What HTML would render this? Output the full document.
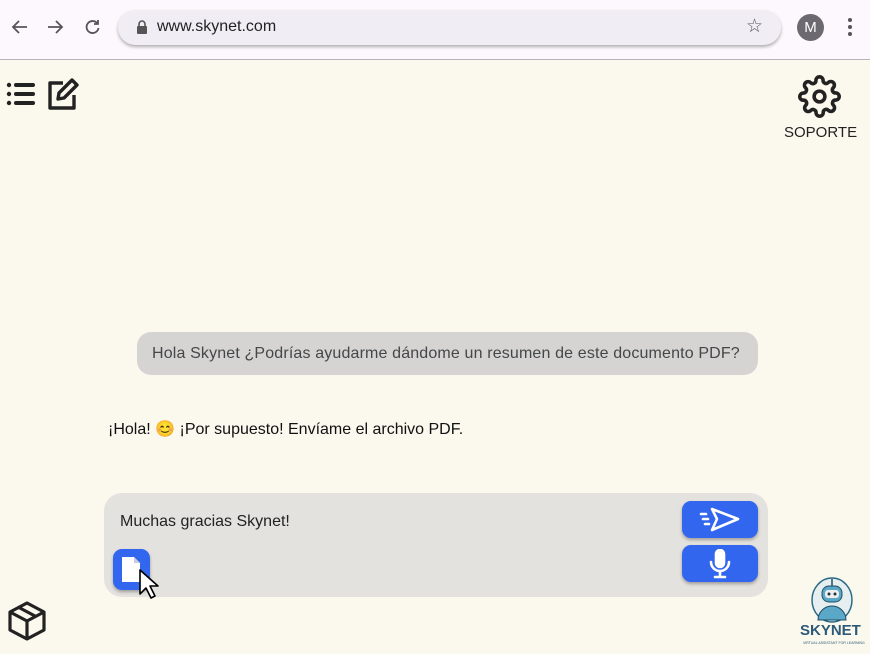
<!DOCTYPE html>
<html><head><meta charset="utf-8"><style>
*{margin:0;padding:0;box-sizing:border-box}
body{width:870px;height:654px;overflow:hidden;background:#fbf9ee;font-family:"Liberation Sans",sans-serif;position:relative}
.top{position:absolute;left:0;top:0;width:870px;height:60px;background:#fcf8fd;border-bottom:1px solid #b9b3bd}
.url{position:absolute;left:118px;top:10px;width:663px;height:35px;border-radius:18px;background:#f0edf5;box-shadow:0 2px 3px rgba(0,0,0,.3)}
.abs{position:absolute}
.bubble{position:absolute;left:137px;top:332px;width:621px;height:43px;border-radius:14px;background:#d6d4d2;color:#44474a;font-size:16px;letter-spacing:0.15px;line-height:43px;padding-left:15px;white-space:nowrap}
.box{position:absolute;left:104px;top:493px;width:664px;height:104px;border-radius:18px;background:#e4e2de}
.btn{position:absolute;background:#3366ee;border-radius:9px;box-shadow:0 2px 3px rgba(0,0,0,.3)}
</style></head><body>
<div class="top">
<svg class="abs" style="left:10px;top:17px" width="100" height="20" viewBox="0 0 100 20" fill="none" stroke="#555" stroke-width="1.8"><path d="M17 10H3M9 4L3 10l6 6"/><path d="M38 10h14M46 4l6 6-6 6"/><path d="M87 6a6 6 0 1 0 1.5 5M88 3v4h-4"/></svg>
<div class="url">
<svg class="abs" style="left:18px;top:10px" width="12" height="14" viewBox="0 0 12 14"><rect x="1" y="6" width="10" height="8" rx="1" fill="#555"/><path d="M3 6V4a3 3 0 0 1 6 0v2" stroke="#555" stroke-width="1.6" fill="none"/></svg>
<div class="abs" style="left:39px;top:8px;font-size:16px;color:#222">www.skynet.com</div>
<div class="abs" style="left:628px;top:5px;font-size:19px;color:#555">☆</div>
</div>
<div class="abs" style="left:797px;top:14px;width:27px;height:27px;border-radius:50%;background:#6c6a70;color:#fff;font-size:15px;text-align:center;line-height:27px">M</div>
<div class="abs" style="left:848px;top:18px;width:4px;height:4px;border-radius:50%;background:#555;box-shadow:0 7px 0 #555,0 14px 0 #555"></div>
</div>
<svg class="abs" style="left:6px;top:82px" width="30" height="24" viewBox="0 0 30 24" fill="#222"><circle cx="3" cy="3" r="2.2"/><circle cx="3" cy="12" r="2.2"/><circle cx="3" cy="21" r="2.2"/><rect x="8" y="1" width="21" height="4" rx="2"/><rect x="8" y="10" width="21" height="4" rx="2"/><rect x="8" y="19" width="21" height="4" rx="2"/></svg>
<svg class="abs" style="left:46px;top:77px" width="34" height="34" viewBox="0 0 34 34" fill="none" stroke="#222" stroke-width="3.4" stroke-linejoin="round"><path d="M17 6H4v25h24V18"/><path d="M12 22l1-6L26 3l5 5-13 13z"/></svg>
<svg class="abs" style="left:798px;top:75px" width="43" height="43" viewBox="0 0 24 24" fill="none" stroke="#222" stroke-width="2"><circle cx="12" cy="12" r="3"/><path d="M19.4 15a1.650 1.650 0 0 0 .33 1.82l.06.06a2 2 0 1 1-2.83 2.830l-.06-.06a1.65 1.65 0 0 0-1.82-.33 1.65 1.65 0 0 0-1 1.51V21a2 2 0 1 1-4 0v-.09A1.65 1.65 0 0 0 9 19.4a1.65 1.65 0 0 0-1.82.33l-.06.06a2 2 0 1 1-2.83-2.83l.06-.06a1.65 1.65 0 0 0 .33-1.82 1.65 1.65 0 0 0-1.51-1H3a2 2 0 1 1 0-4h.09A1.65 1.65 0 0 0 4.6 9a1.65 1.65 0 0 0-.33-1.820l-.06-.06a2 2 0 1 1 2.83-2.83l.06.06a1.65 1.65 0 0 0 1.82.33H9a1.65 1.65 0 0 0 1-1.51V3a2 2 0 1 1 4 0v.09a1.65 1.65 0 0 0 1 1.51 1.65 1.65 0 0 0 1.82-.33l.06-.06a2 2 0 1 1 2.83 2.83l-.06.06a1.65 1.65 0 0 0-.33 1.82V9a1.65 1.65 0 0 0 1.51 1H21a2 2 0 1 1 0 4h-.09a1.65 1.65 0 0 0-1.51 1z"/></svg>
<div class="abs" style="left:784px;top:124px;font-size:15px;color:#222">SOPORTE</div>
<div class="bubble">Hola Skynet ¿Podrías ayudarme dándome un resumen de este documento PDF?</div>
<div class="abs" style="left:108px;top:419px;font-size:16px;color:#111">¡Hola! 😊 ¡Por supuesto! Envíame el archivo PDF.</div>
<div class="box">
<div class="abs" style="left:16px;top:20px;font-size:16px;color:#222">Muchas gracias Skynet!</div>
<div class="btn" style="left:578px;top:8px;width:76px;height:37px"><svg class="abs" style="left:16px;top:5px" width="44" height="27" viewBox="0 0 44 27" fill="none" stroke="#fff" stroke-width="2.6" stroke-linecap="round" stroke-linejoin="round"><path d="M14 3l26 10-26 11 5-11z"/><path d="M3 8h5M5 13h5M7 18h4"/></svg></div>
<div class="btn" style="left:578px;top:52px;width:76px;height:37px"><svg class="abs" style="left:26px;top:4px" width="24" height="30" viewBox="0 0 24 30" fill="none" stroke="#fff" stroke-width="2.6" stroke-linecap="round"><rect x="8" y="1" width="8" height="17" rx="4" fill="#fff"/><path d="M3 13a9 9 0 0 0 18 0M12 22v6M7 28h10"/></svg></div>
<div class="btn" style="left:9px;top:56px;width:37px;height:41px;border-radius:9px"><svg class="abs" style="left:8px;top:7px" width="20" height="27" viewBox="0 0 20 27"><path d="M1 1h12l6 6v19H1z" fill="#fff"/><path d="M13 1v6h6" fill="#ccd" /></svg></div>
</div>
<svg class="abs" style="left:138px;top:568px" width="22" height="32" viewBox="0 0 22 32"><path d="M2 2v24l6-6 5 10 4-2-5-10h8z" fill="#fff" stroke="#000" stroke-width="1.6" stroke-linejoin="round"/></svg>
<svg class="abs" style="left:6px;top:600px" width="42" height="42" viewBox="0 0 42 42" fill="none" stroke="#222" stroke-width="3.2" stroke-linejoin="round"><path d="M21 3l17 9v18l-17 9-17-9V12z"/><path d="M4 12l17 9 17-9M21 21v18M12 7l17 9"/></svg>
<svg class="abs" style="left:808px;top:576px" width="48" height="48" viewBox="0 0 48 48"><ellipse cx="24" cy="24" rx="20" ry="22" fill="#e6eef0" stroke="#2d6a86" stroke-width="1.5"/><rect x="14" y="10" width="20" height="16" rx="7" fill="#5aa7c8" stroke="#1f4f66"/><rect x="17" y="14" width="14" height="8" rx="3" fill="#eee"/><circle cx="21" cy="18" r="1.5" fill="#234"/><circle cx="27" cy="18" r="1.5" fill="#234"/><path d="M10 44a14 14 0 0 1 28 0z" fill="#5aa7c8" stroke="#1f4f66"/><line x1="24" y1="3" x2="24" y2="10" stroke="#1f4f66" stroke-width="1.5"/></svg>
<div class="abs" style="left:800px;top:622px;font-size:15px;font-weight:bold;color:#2d5a78">SKYNET</div>
<div class="abs" style="left:803px;top:641px;font-size:3.5px;color:#2d5a78">VIRTUAL ASSISTANT FOR LEARNING</div>
</body></html>
